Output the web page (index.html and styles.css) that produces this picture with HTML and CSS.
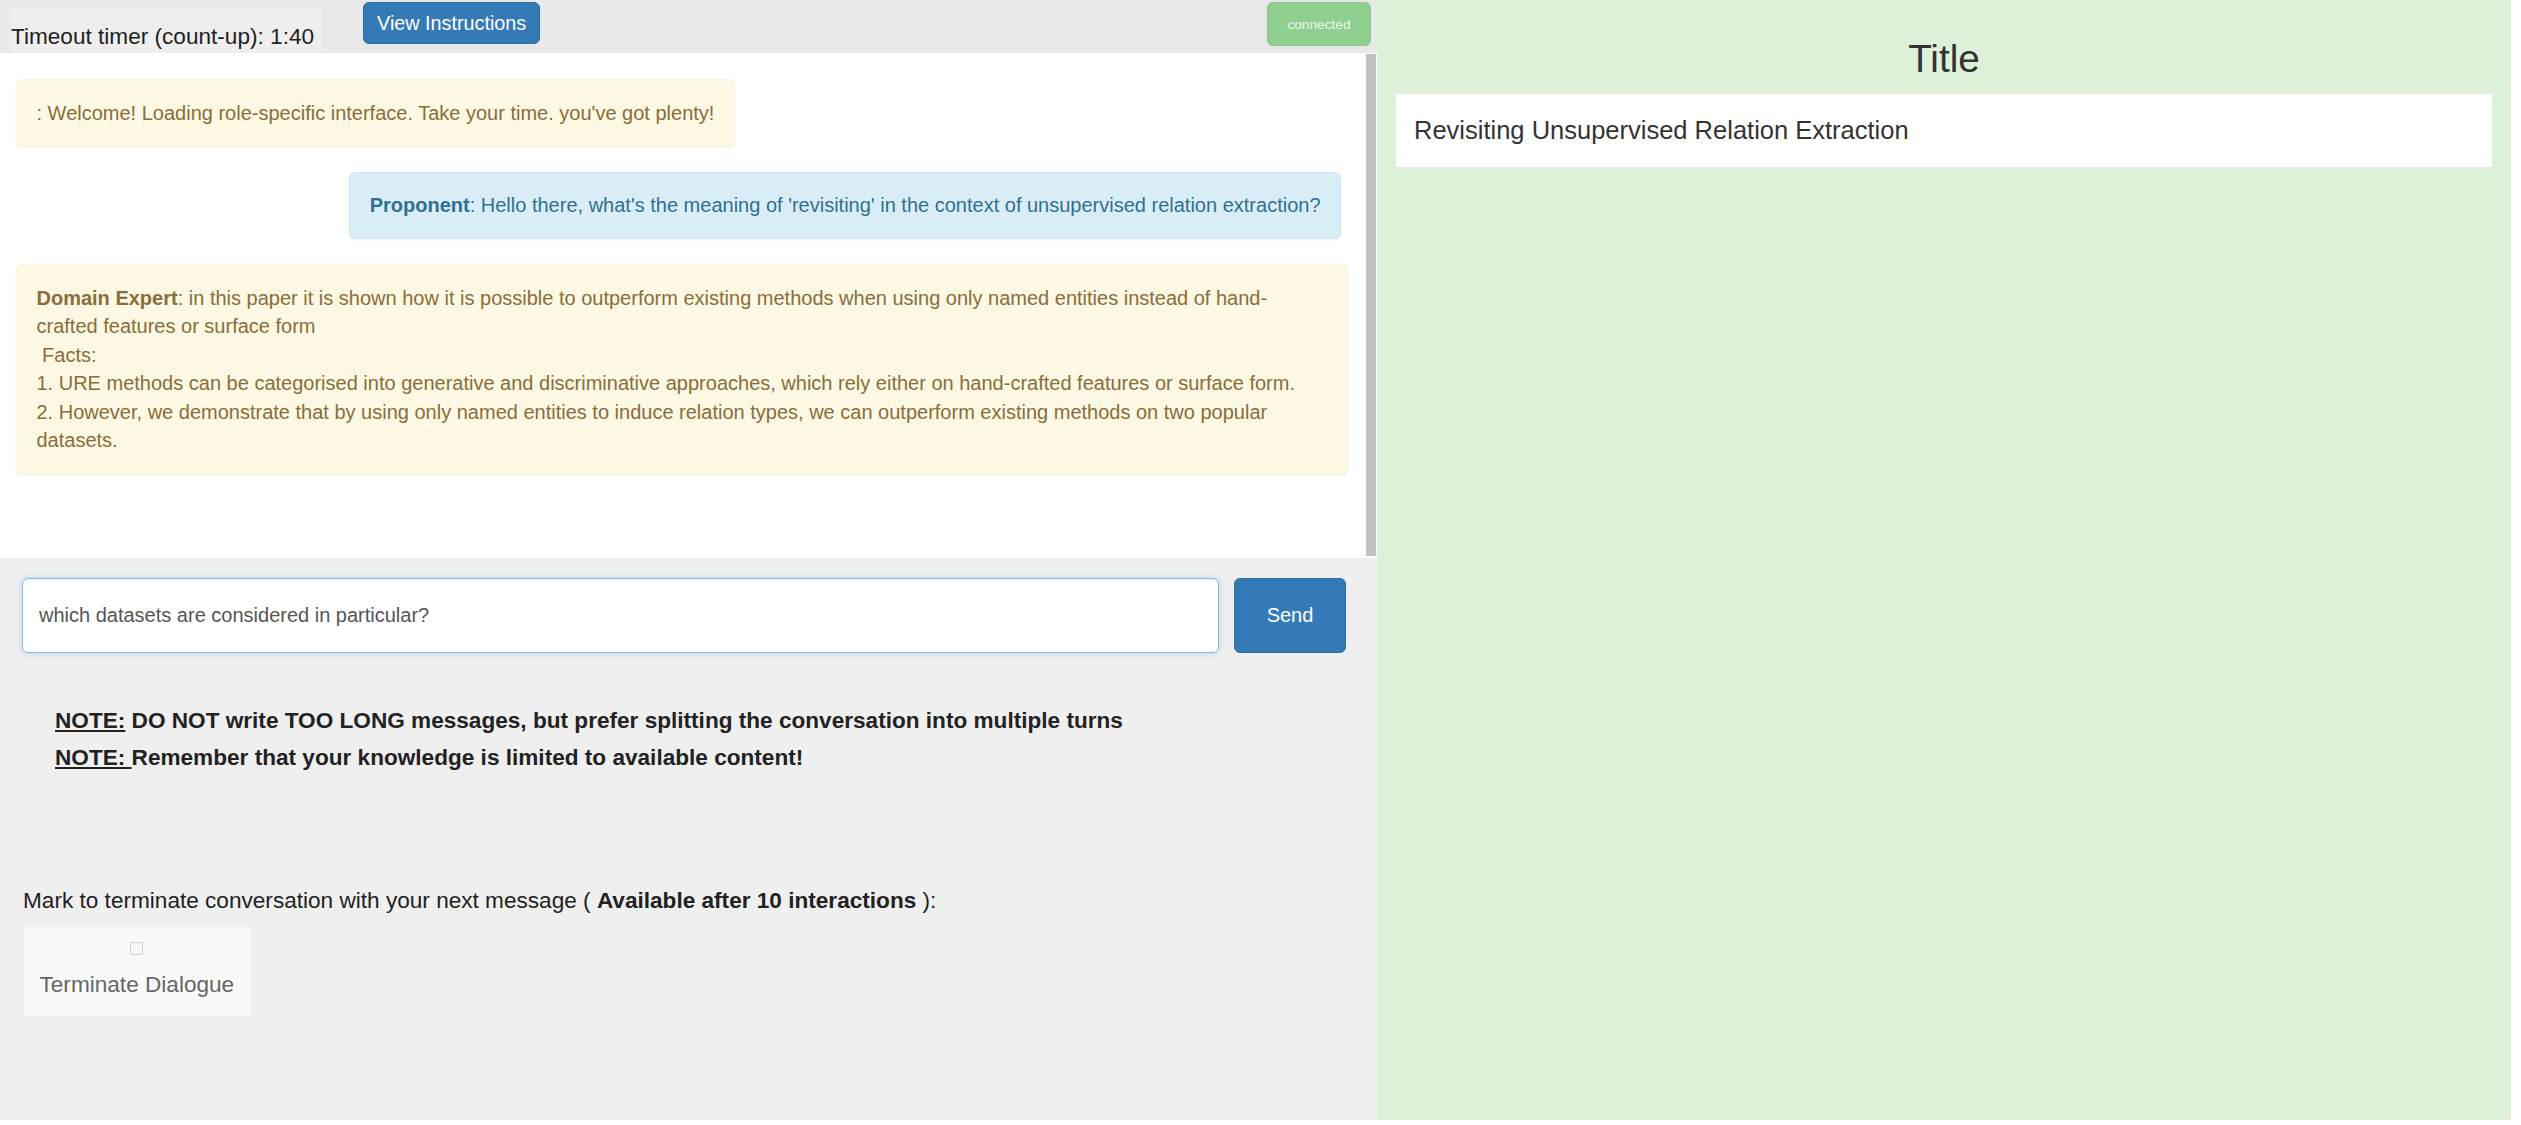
FILE: index.html
```html
<!DOCTYPE html>
<html lang="en">
<head>
<meta charset="utf-8">
<title>Dialogue</title>
<link rel="stylesheet" href="styles.css">
</head>
<body>
<div class="app">
  <div class="left">
    <div class="topbar">
      <div class="timer">Timeout timer (count-up): 1:40</div>
      <button class="btn btn-primary btn-instr">View Instructions</button>
      <button class="btn btn-connected">connected</button>
    </div>
    <div class="chat">
      <div class="messages">
        <div class="msg msg-warning">: Welcome! Loading role-specific interface. Take your time. you've got plenty!</div>
        <div class="msg msg-info msg-self"><b>Proponent</b>: Hello there, what's the meaning of 'revisiting' in the context of unsupervised relation extraction?</div>
        <div class="msg msg-warning msg-full"><b>Domain Expert</b>: in this paper it is shown how it is possible to outperform existing methods when using only named entities instead of hand-<br>crafted features or surface form<br>&nbsp;Facts:<br>1. URE methods can be categorised into generative and discriminative approaches, which rely either on hand-crafted features or surface form.<br>2. However, we demonstrate that by using only named entities to induce relation types, we can outperform existing methods on two popular datasets.</div>
      </div>
      <div class="scrollbar"></div>
    </div>
    <div class="composer">
      <div class="input-row">
        <input class="msg-input" type="text" value="which datasets are considered in particular?">
        <button class="btn btn-primary btn-send">Send</button>
      </div>
      <div class="notes">
        <div><u>NOTE:</u> DO NOT write TOO LONG messages, but prefer splitting the conversation into multiple turns</div>
        <div><u>NOTE: </u>Remember that your knowledge is limited to available content!</div>
      </div>
      <p class="mark">Mark to terminate conversation with your next message ( <b>Available after 10 interactions</b> ):</p>
      <label class="terminate"><input type="checkbox" disabled><span>Terminate Dialogue</span></label>
    </div>
  </div>
  <div class="right">
    <h3 class="title">Title</h3>
    <div class="paper-title">Revisiting Unsupervised Relation Extraction</div>
  </div>
</div>
</body>
</html>
```
FILE: styles.css
```css
html, body {
  margin: 0;
  padding: 0;
  background: #fff;
}

body {
  font-family: "Liberation Sans", Arial, sans-serif;
  color: #333;
}

.app {
  display: flex;
  height: 1120px;
  margin-right: 10px;
}

.left {
  width: 1377px;
  flex: none;
  display: flex;
  flex-direction: column;
}

.topbar {
  height: 53px;
  flex: none;
  background: #e9e9e9;
  display: flex;
  align-items: flex-start;
}

.timer {
  margin: 8px 0 0 11px;
  padding: 16px 8px 4px 0;
  line-height: 25px;
  font-size: 22.6px;
  color: #222;
  background: #eeeeee;
}

.btn {
  font-family: inherit;
  border: 1px solid transparent;
  border-radius: 6px;
  cursor: pointer;
}

.btn-primary {
  background: #337ab7;
  border-color: #2e6da4;
  color: #fff;
}

.btn-instr {
  margin: 2px 0 0 41px;
  height: 42px;
  padding: 0 13px;
  font-size: 19.8px;
}

.btn-connected {
  margin: 2px 6px 0 auto;
  width: 104px;
  height: 44px;
  padding: 0;
  font-size: 13.7px;
  background: #8fcf8f;
  border-color: #86c986;
  color: rgba(255, 255, 255, 0.85);
}

.chat {
  height: 505px;
  flex: none;
  display: flex;
  background: #fff;
}

.messages {
  flex: 1;
  padding: 26px 18px 0 16px;
  display: flex;
  flex-direction: column;
  align-items: flex-start;
  gap: 25px;
}

.msg {
  font-size: 20px;
  line-height: 28.57px;
  padding: 18.5px 19.5px;
  border: 1px solid;
  border-radius: 6px;
  box-shadow: 0 1px 2px rgba(0, 0, 0, 0.05);
}

.msg-warning {
  background: #fcf8e3;
  border-color: #faf3dc;
  color: #8a6d3b;
}

.msg-info {
  background: #d9edf7;
  border-color: #cfe8f3;
  color: #31708f;
}

.msg-self {
  align-self: flex-end;
  margin-right: 7px;
}

.msg-full {
  align-self: stretch;
}

.scrollbar {
  width: 10px;
  margin: 1px 1px 2px 0;
  background: #c1c1c1;
}

.composer {
  flex: 1;
  background: #efefef;
  padding: 20px 31px 0 22px;
}

.input-row {
  display: flex;
  gap: 15px;
}

.msg-input {
  flex: 1;
  height: 75px;
  box-sizing: border-box;
  border: 1px solid #8fb8db;
  border-radius: 6px;
  padding: 0 16px;
  font-family: "Liberation Sans", Arial, sans-serif;
  font-size: 20px;
  color: #555;
  background: #fff;
  outline: none;
  box-shadow: inset 0 1px 1px rgba(0, 0, 0, 0.075), 0 0 6px rgba(102, 175, 233, 0.45);
}

.btn-send {
  width: 112px;
  height: 75px;
  padding: 0;
  font-size: 20px;
}

.notes {
  margin: 48.6px 0 0 33px;
  font-weight: bold;
  font-size: 22.6px;
  line-height: 37px;
  color: #222;
}

.mark {
  margin: 109px 0 0 1px;
  font-size: 22.6px;
  line-height: 32.3px;
  color: #222;
}

.terminate {
  display: flex;
  flex-direction: column;
  align-items: center;
  width: max-content;
  margin: 9.7px 0 0 2px;
  padding: 12px 15.5px 14.7px;
  background: #f9f9f9;
  color: #666;
  font-size: 22.6px;
  line-height: 32.3px;
}

.terminate input {
  margin: 3px;
  width: 13px;
  height: 13px;
}

.terminate span {
  margin-top: 11px;
}

.right {
  flex: 1;
  background: #dff0d8;
  padding: 38px 19px 0;
}

.title {
  margin: 0 0 13px;
  font-size: 38.7px;
  line-height: 42.6px;
  font-weight: normal;
  text-align: center;
  color: #333;
}

.paper-title {
  height: 73px;
  box-sizing: border-box;
  padding: 0 18px;
  display: flex;
  align-items: center;
  background: #fff;
  font-size: 25.5px;
  color: #333;
}
```
